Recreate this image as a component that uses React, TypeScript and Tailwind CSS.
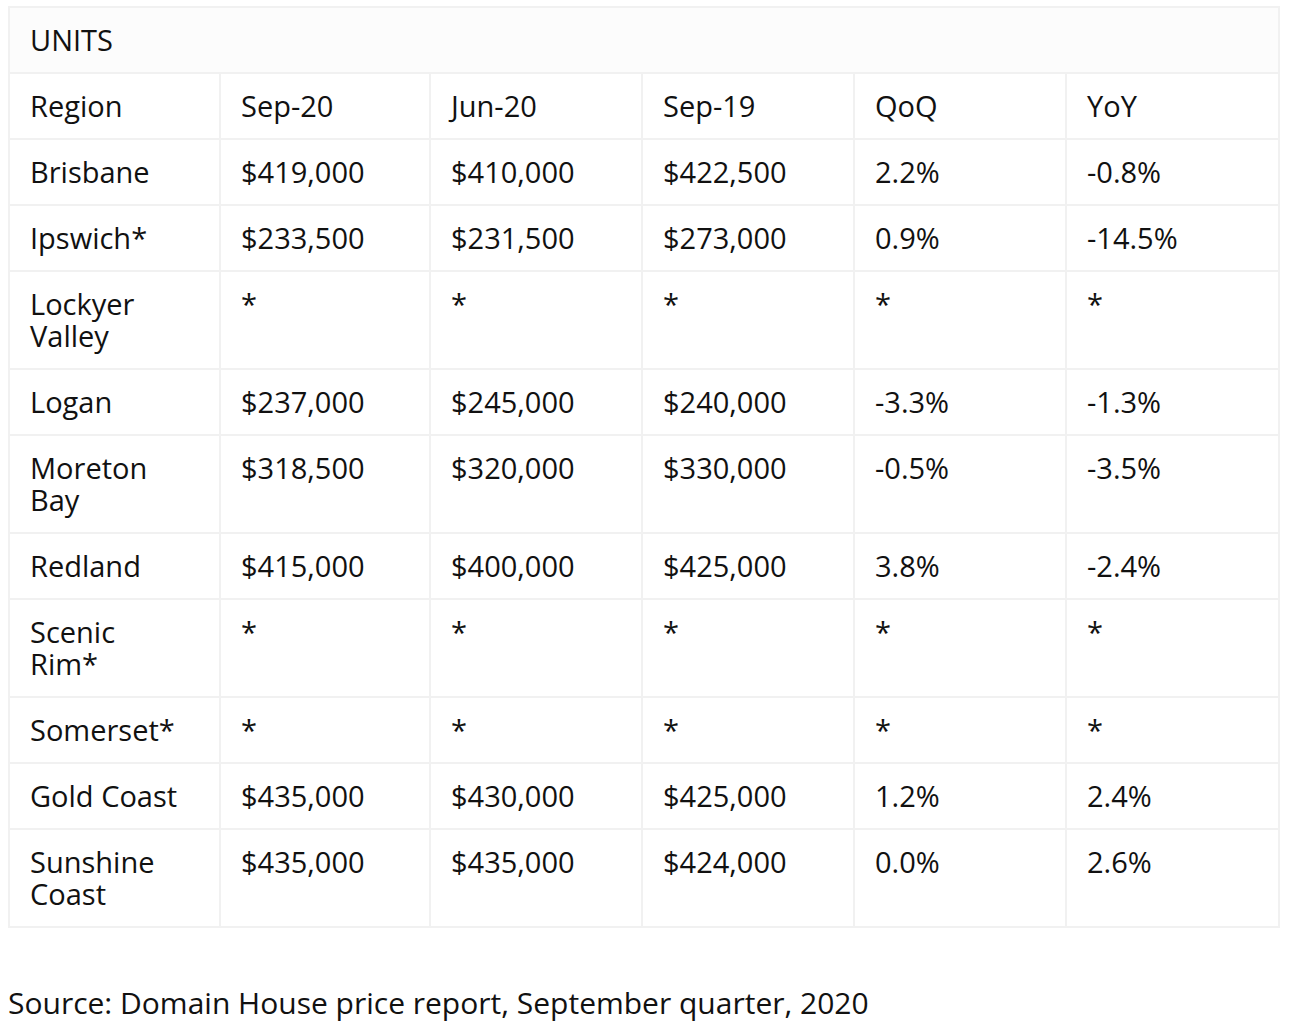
const rows: string[][] = [
  ["Brisbane", "$419,000", "$410,000", "$422,500", "2.2%", "-0.8%"],
  ["Ipswich*", "$233,500", "$231,500", "$273,000", "0.9%", "-14.5%"],
  ["Lockyer\nValley", "*", "*", "*", "*", "*"],
  ["Logan", "$237,000", "$245,000", "$240,000", "-3.3%", "-1.3%"],
  ["Moreton\nBay", "$318,500", "$320,000", "$330,000", "-0.5%", "-3.5%"],
  ["Redland", "$415,000", "$400,000", "$425,000", "3.8%", "-2.4%"],
  ["Scenic\nRim*", "*", "*", "*", "*", "*"],
  ["Somerset*", "*", "*", "*", "*", "*"],
  ["Gold Coast", "$435,000", "$430,000", "$425,000", "1.2%", "2.4%"],
  ["Sunshine\nCoast", "$435,000", "$435,000", "$424,000", "0.0%", "2.6%"],
]

const head = ["Region", "Sep-20", "Jun-20", "Sep-19", "QoQ", "YoY"]

const cell = "border-2 border-[#f1f1f1] px-[20px] py-[16px] align-top"

export default function App() {
  return (
    <div className="bg-white min-h-[1034px] pl-[8px] pt-[6px] text-[#111] font-['Open_Sans',sans-serif]">
      <table className="w-[1270px] table-fixed border-collapse text-[29px] leading-[32px]">
        <colgroup>
          <col className="w-[211px]" />
          <col className="w-[210px]" />
          <col className="w-[212px]" />
          <col className="w-[212px]" />
          <col className="w-[212px]" />
          <col className="w-[213px]" />
        </colgroup>
        <thead>
          <tr>
            <th colSpan={6} className={`${cell} bg-[#fcfcfc] text-left font-normal`}>
              UNITS
            </th>
          </tr>
          <tr>
            {head.map((h) => (
              <th key={h} className={`${cell} text-left font-normal`}>
                {h}
              </th>
            ))}
          </tr>
        </thead>
        <tbody>
          {rows.map((r) => (
            <tr key={r[0]}>
              {r.map((v, i) => (
                <td key={i} className={`${cell} whitespace-pre-line`}>
                  {v}
                </td>
              ))}
            </tr>
          ))}
        </tbody>
      </table>
      <p className="mt-[55px] text-[30px] leading-[40px]">
        Source: Domain House price report, September quarter, 2020
      </p>
    </div>
  )
}
